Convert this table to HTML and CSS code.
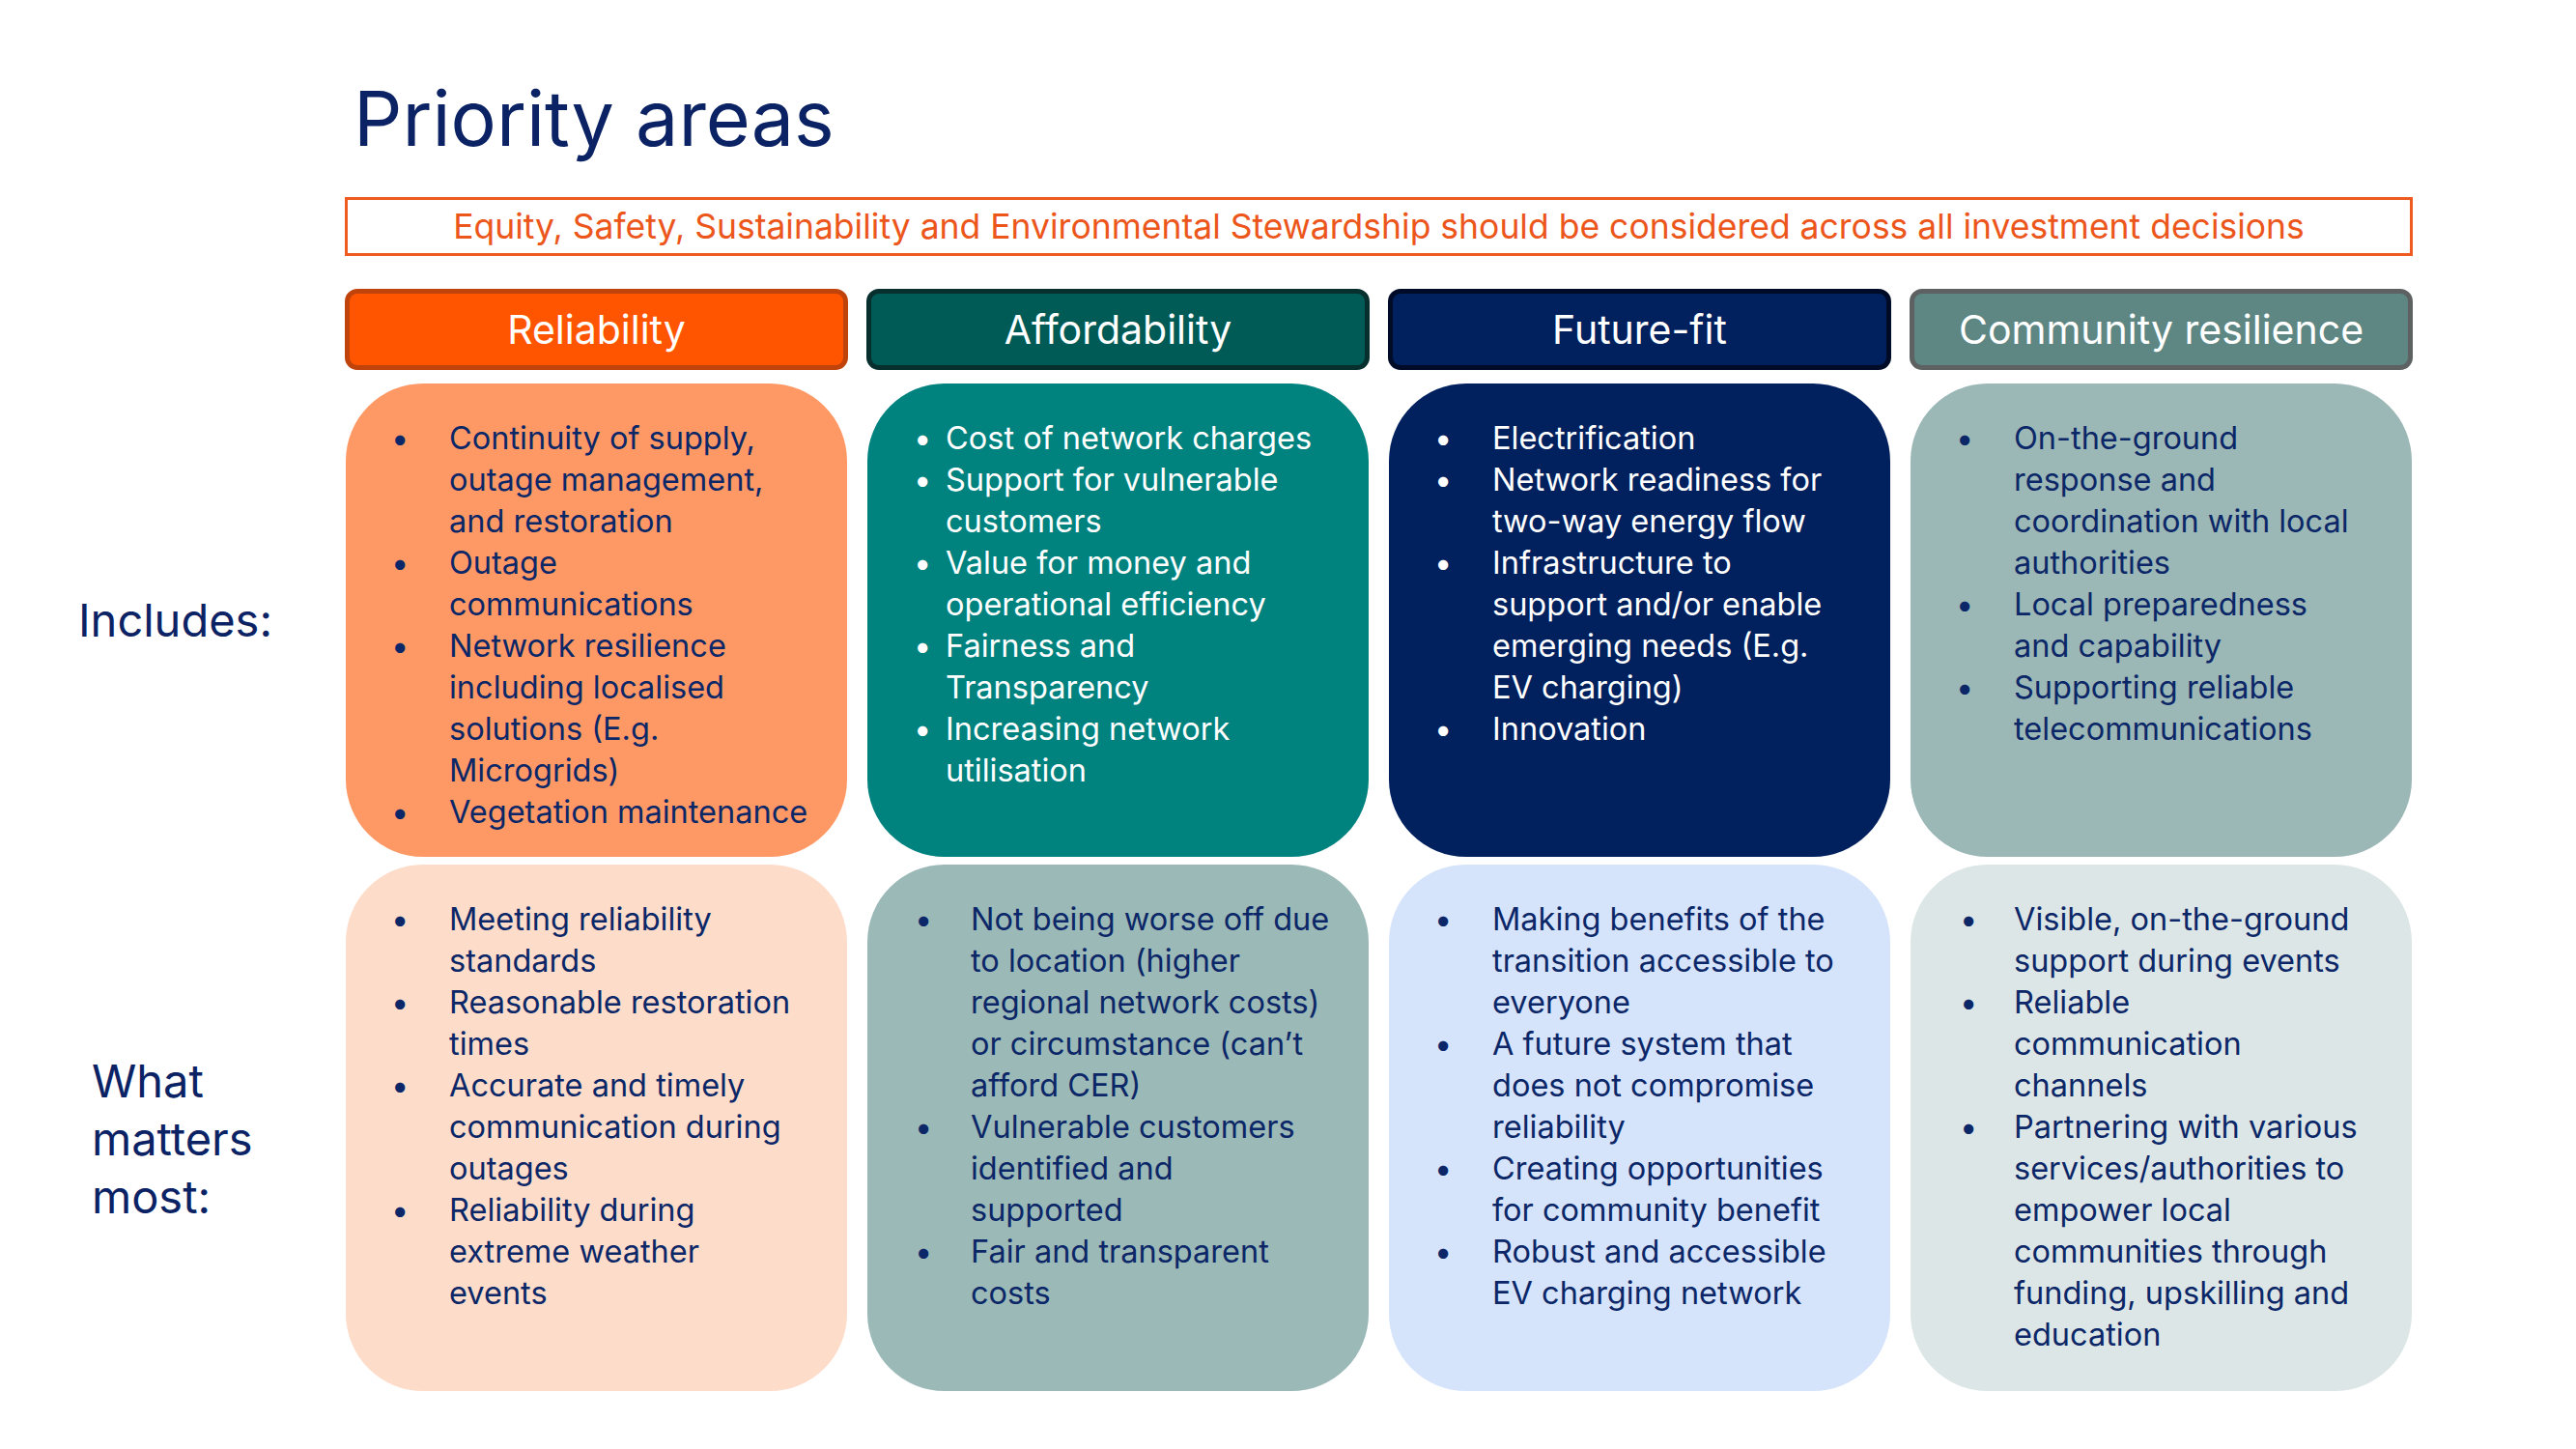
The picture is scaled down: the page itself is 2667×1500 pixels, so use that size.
FILE: index.html
```html
<!DOCTYPE html>
<html lang="en">
<head>
<meta charset="utf-8">
<title>Priority areas</title>
<link rel="stylesheet" href="styles.css">
</head>
<body>
<div class="slide">
  <h1 class="title">Priority areas</h1>
  <div class="banner">Equity, Safety, Sustainability and Environmental Stewardship should be considered across all investment decisions</div>

  <div class="board">
    <div class="corner"></div>
    <div class="tab tab-rel">Reliability</div>
    <div class="tab tab-aff">Affordability</div>
    <div class="tab tab-fut">Future-fit</div>
    <div class="tab tab-com">Community resilience</div>

    <div class="label label-inc">Includes:</div>
    <div class="card rel-top">
      <ul class="items">
        <li>Continuity of supply,<br>outage management,<br>and restoration</li>
        <li>Outage<br>communications</li>
        <li>Network resilience<br>including localised<br>solutions (E.g.<br>Microgrids)</li>
        <li>Vegetation maintenance</li>
      </ul>
    </div>
    <div class="card aff-top light-text">
      <ul class="items tight">
        <li>Cost of network charges</li>
        <li>Support for vulnerable<br>customers</li>
        <li>Value for money and<br>operational efficiency</li>
        <li>Fairness and<br>Transparency</li>
        <li>Increasing network<br>utilisation</li>
      </ul>
    </div>
    <div class="card fut-top light-text">
      <ul class="items">
        <li>Electrification</li>
        <li>Network readiness for<br>two-way energy flow</li>
        <li>Infrastructure to<br>support and/or enable<br>emerging needs (E.g.<br>EV charging)</li>
        <li>Innovation</li>
      </ul>
    </div>
    <div class="card com-top">
      <ul class="items">
        <li>On-the-ground<br>response and<br>coordination with local<br>authorities</li>
        <li>Local preparedness<br>and capability</li>
        <li>Supporting reliable<br>telecommunications</li>
      </ul>
    </div>

    <div class="label label-what">What<br>matters<br>most:</div>
    <div class="card rel-bot">
      <ul class="items">
        <li>Meeting reliability<br>standards</li>
        <li>Reasonable restoration<br>times</li>
        <li>Accurate and timely<br>communication during<br>outages</li>
        <li>Reliability during<br>extreme weather<br>events</li>
      </ul>
    </div>
    <div class="card aff-bot">
      <ul class="items">
        <li>Not being worse off due<br>to location (higher<br>regional network costs)<br>or circumstance (can’t<br>afford CER)</li>
        <li>Vulnerable customers<br>identified and<br>supported</li>
        <li>Fair and transparent<br>costs</li>
      </ul>
    </div>
    <div class="card fut-bot">
      <ul class="items">
        <li>Making benefits of the<br>transition accessible to<br>everyone</li>
        <li>A future system that<br>does not compromise<br>reliability</li>
        <li>Creating opportunities<br>for community benefit</li>
        <li>Robust and accessible<br>EV charging network</li>
      </ul>
    </div>
    <div class="card com-bot">
      <ul class="items">
        <li>Visible, on-the-ground<br>support during events</li>
        <li>Reliable<br>communication<br>channels</li>
        <li>Partnering with various<br>services/authorities to<br>empower local<br>communities through<br>funding, upskilling and<br>education</li>
      </ul>
    </div>
  </div>
</div>
</body>
</html>
```

FILE: styles.css
```css
html, body {
  margin: 0;
  padding: 0;
  background: #ffffff;
}

body {
  font-family: Inter, "Liberation Sans", sans-serif;
  color: #0b2566;
}

.slide {
  width: 2667px;
  height: 1500px;
  padding-top: 83px;
  box-sizing: border-box;
}

.title {
  margin: 0 0 0 366px;
  font-size: 79px;
  line-height: 78px;
  font-weight: 400;
  color: #0b2364;
}

.banner {
  margin: 43px 0 0 357px;
  width: 2141px;
  height: 61px;
  box-sizing: border-box;
  border: 3px solid #ee5a1f;
  color: #ec561b;
  font-size: 35.5px;
  line-height: 55px;
  text-align: center;
  white-space: nowrap;
}

.board {
  margin-top: 34px;
  display: grid;
  grid-template-columns: 338px repeat(4, 521px);
  grid-template-rows: auto 490px 545px;
  column-gap: 19px;
  row-gap: 8px;
}

.tab {
  height: 84px;
  margin-bottom: 6px;
  box-sizing: border-box;
  border: 5px solid;
  border-radius: 13px;
  color: #ffffff;
  font-size: 41px;
  line-height: 74px;
  text-align: center;
  white-space: nowrap;
}

.tab-rel { background: #ff5500; border-color: #c0430c; }
.tab-aff { background: #005b56; border-color: #062f2d; }
.tab-fut { background: #00205e; border-color: #000b28; }
.tab-com { background: #5e8784; border-color: #5d6161; }

.label {
  align-self: center;
  font-size: 47px;
  line-height: 60px;
  color: #0b2364;
}

.label-inc { padding-left: 81px; }
.label-what { padding-left: 95px; padding-top: 22px; }

.card {
  margin: 0 1px;
  border-radius: 80px;
  padding: 35px 10px 0 47px;
  box-sizing: border-box;
  color: #0b2767;
}

.light-text { color: #ffffff; }

.rel-top { background: #fe9966; }
.aff-top { background: #00827f; padding-left: 48px; }
.fut-top { background: #00205e; }
.com-top { background: #9bb7b6; }

.rel-bot { background: #fddcca; }
.aff-bot { background: #9bb9b7; padding-left: 49px; }
.fut-bot { background: #d5e3fb; }
.com-bot { background: #dde6e6; padding-left: 51px; }

.items {
  list-style: none;
  margin: 0;
  padding: 0;
  font-size: 32.5px;
  line-height: 43px;
  white-space: nowrap;
}

.items li {
  display: grid;
  grid-template-columns: 60px auto;
}

.items li::before {
  content: "\2022";
}

.items.tight li {
  grid-template-columns: 33px auto;
}

.aff-bot .items li { grid-template-columns: 58px auto; }
.com-bot .items li { grid-template-columns: 56px auto; }
```
